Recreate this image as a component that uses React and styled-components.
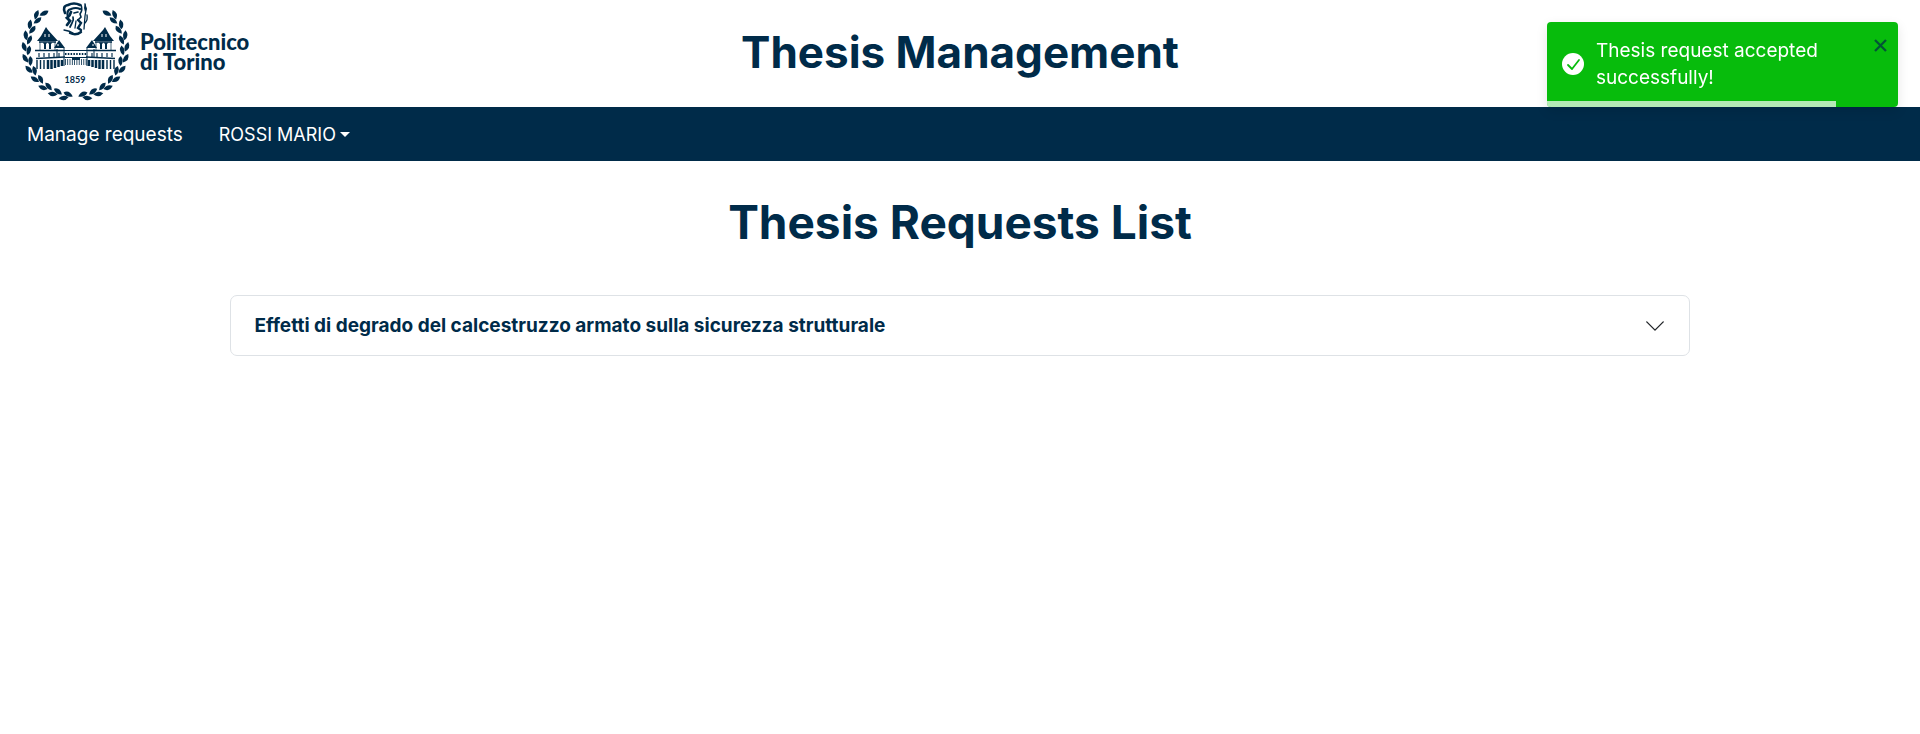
import React, { useState } from "react";
import styled, { createGlobalStyle } from "styled-components";

const navy = "#002b49";

const GlobalStyle = createGlobalStyle`
  *, *::before, *::after { box-sizing: border-box; }
  body {
    margin: 0;
    background: #fff;
    color: ${navy};
    font-family: Inter, "Open Sans", sans-serif;
    font-size: 19px;
    line-height: 27px;
  }
  button { font: inherit; border: 0; background: none; cursor: pointer; }
`;

const Header = styled.header`
  display: grid;
  grid-template-columns: 1fr auto 1fr;
  align-items: center;
`;

const Brand = styled.a`
  display: flex;
  align-items: center;
  gap: 7px;
  padding-left: 20px;
  color: inherit;
  text-decoration: none;
`;

const Crest = styled.svg`
  display: block;
  width: 113px;
  height: 107px;
  flex: none;
`;

const BrandName = styled.span`
  display: flex;
  flex-direction: column;
  padding-bottom: 4px;
  font-family: Lato, sans-serif;
  font-size: 22px;
  font-weight: 900;
  line-height: 20px;
`;

const SiteTitle = styled.h1`
  margin: 0;
  padding-bottom: 4px;
  font-size: 44px;
  font-weight: 700;
  line-height: 54px;
`;

const NavBar = styled.nav`
  display: flex;
  align-items: center;
  gap: 36px;
  padding: 14px 27px 13px;
  background: ${navy};
  color: #fff;
`;

const NavLink = styled.a`
  color: inherit;
  text-decoration: none;
`;

const UserMenu = styled.button`
  display: flex;
  align-items: center;
  gap: 4px;
  padding: 0;
  color: inherit;
  font-size: 18px;
`;

const Caret = styled.span`
  border: 5px solid transparent;
  border-top-color: currentColor;
  border-bottom: 0;
`;

const Main = styled.main`
  width: 76%;
  margin: 0 auto;
  padding-top: 31px;
`;

const PageTitle = styled.h2`
  margin: 0 0 43px;
  font-size: 46px;
  font-weight: 700;
  line-height: 60px;
  text-align: center;
`;

const RequestItem = styled.button`
  display: flex;
  align-items: center;
  justify-content: space-between;
  width: 100%;
  padding: 16px 23px;
  border: 1px solid #dee2e6;
  border-radius: 7px;
  background: #fff;
  color: inherit;
  font-weight: 700;
  text-align: left;
`;

const Toast = styled.div`
  position: fixed;
  top: 22px;
  right: 22px;
  display: flex;
  align-items: center;
  gap: 12px;
  width: 351px;
  padding: 15px 15px 16px;
  border-radius: 4px;
  background: #07bc0c;
  color: #fff;
  box-shadow: 0 4px 12px rgba(0, 0, 0, 0.1);
`;

const ToastText = styled.p`
  flex: 1;
  margin: 0;
  padding-right: 60px;
`;

const ToastClose = styled.button`
  position: absolute;
  top: 17px;
  right: 11px;
  display: flex;
  padding: 0;
  color: ${navy};
  opacity: 0.7;
`;

const Progress = styled.div`
  position: absolute;
  left: 0;
  bottom: 0;
  width: 100%;
  height: 6px;
  border-radius: 0 0 4px 4px;
  overflow: hidden;
`;

const ProgressFill = styled.div`
  height: 100%;
  background: rgba(255, 255, 255, 0.7);
`;

const leafAngles = [9, 22, 35, 48, 61, 74, 87, 100, 113, 126, 138];

function Branch() {
  return leafAngles.map((a, i) => (
    <g key={a} transform={`rotate(${a} 55.5 48) translate(55.500 97)`}>
      <path transform="translate(0 -2) rotate(14)" d="M-5 0Q-1-5 5 0Q0 4-5 0Z" />
      {i < 10 && <path transform="translate(-4 2) rotate(-16)" d="M-5 0Q0-4 5 0Q0 5-5 0Z" />}
    </g>
  ));
}

function Wing() {
  return (
    <g>
      <path d="M26 27L28 30L38 41H17L21 36Z" />
      <path d="M25 34v3M29 34v3" stroke="#fff" />
      <path d="M19 42H36M15 50.500H43M16 58.500L45 57" stroke={navy} strokeWidth="1.300" />
      <path d="M20 42V50M35 42V50" stroke={navy} strokeWidth=".7" />
      <path d="M25 43v6M30 43v6" stroke={navy} strokeWidth="2" />
      <path d="M23 43h4M28 43h4" stroke={navy} />
      <path d="M19 53v4M24 53v4M29 53v4M34 53v4M39 53v4" stroke={navy} strokeWidth="1.500" opacity=".75" />
      <path d="M17 60v9M20.500 60v9M24 60v9" stroke={navy} strokeWidth="1.400" />
      <path d="M28 60v9M31.500 60v9M35 60v8M38.500 60v7M42 60v6" stroke={navy} strokeWidth="2.500" />
      <path d="M39 40L45 48H34Z" />
      <path d="M38 44v2" stroke="#fff" />
      <path d="M44 48V66M37 49V57" stroke={navy} />
    </g>
  );
}

function Logo() {
  return (
    <Crest viewBox="0 0 113 107" fill={navy} aria-hidden="true">
      <Branch />
      <g transform="translate(111 0) scale(-1 1)"><Branch /></g>
      <Wing />
      <g transform="translate(111 0) scale(-1 1)"><Wing /></g>
      <g fill="none" stroke={navy}>
        <path d="M43 50.500H69M45 57.500H67" strokeWidth="1.200" />
        <path d="M45 54H67" strokeWidth="2" strokeDasharray="1.500 1.300" />
        <path d="M45 62H67" strokeWidth="6" strokeDasharray=".8 1.500" />
        <path d="M52 59H60" strokeWidth="2" />
      </g>
      <g fill="none" stroke={navy} strokeLinecap="round">
        <path d="M45 13Q42 6 48 5Q54 2 60 5" strokeWidth="2.600" />
        <path d="M48 17Q46 10 51 9Q56 7 60 9" strokeWidth="2.200" />
        <path d="M61 5Q63 10 60 14L61 17L58 20" strokeWidth="1.600" />
        <path d="M51 12Q50 16 47 18L50 21L47 25" strokeWidth="2.800" />
        <path d="M54 13L58 12M53 17Q54 20 52 23L50 27" strokeWidth="1.700" />
        <path d="M58 20L61 23L58 28L61 30" strokeWidth="2.400" />
        <path d="M56 21L55 28" strokeWidth="1.300" />
        <path d="M44 30Q50 31 53 33" strokeWidth="1.300" />
        <path d="M50 33Q56 36 61 32" strokeWidth="2.400" />
        <path d="M65 4L66 10L65 16L64 29M67 15Q68 20 65 23" strokeWidth="1.300" />
      </g>
      <path d="M65 3L67 9L65 12L64 8Z" />
      <text x="55" y="83" textAnchor="middle" fontFamily="Lato, sans-serif" fontSize="9" fontWeight="700">1859</text>
    </Crest>
  );
}

export default function App() {
  const [toastOpen, setToastOpen] = useState(true);
  const progress = 82.4;

  return (
    <>
      <GlobalStyle />
      <Header>
        <Brand href="#">
          <Logo />
          <BrandName>
            <span>Politecnico</span>
            <span>di Torino</span>
          </BrandName>
        </Brand>
        <SiteTitle>Thesis Management</SiteTitle>
      </Header>
      <NavBar>
        <NavLink href="#requests">Manage requests</NavLink>
        <UserMenu type="button" aria-haspopup="menu">ROSSI MARIO<Caret /></UserMenu>
      </NavBar>
      <Main>
        <PageTitle>Thesis Requests List</PageTitle>
        <RequestItem type="button" aria-expanded="false">
          Effetti di degrado del calcestruzzo armato sulla sicurezza strutturale
          <svg width="22" height="22" viewBox="0 0 16 16" fill="none" stroke="#212529" strokeLinecap="round" strokeLinejoin="round" aria-hidden="true">
            <path d="m2 5 6 6 6-6" />
          </svg>
        </RequestItem>
      </Main>
      {toastOpen && (
        <Toast role="alert">
          <svg width="22" height="22" viewBox="0 0 22 22" aria-hidden="true">
            <circle cx="11" cy="11" r="11" fill="#fff" />
            <path d="M6 12L10 16L17 7" fill="none" stroke="#07bc0c" strokeWidth="1.800" strokeLinecap="round" strokeLinejoin="round" />
          </svg>
          <ToastText>Thesis request accepted successfully!</ToastText>
          <ToastClose type="button" aria-label="Close" onClick={() => setToastOpen(false)}>
            <svg width="13" height="13" viewBox="0 0 13 13" fill="none" stroke="currentColor" strokeWidth="2.300" aria-hidden="true">
              <path d="M1 1L12 12M12 1L1 12" />
            </svg>
          </ToastClose>
          <Progress>
            <ProgressFill style={{ width: `${progress}%` }} />
          </Progress>
        </Toast>
      )}
    </>
  );
}
